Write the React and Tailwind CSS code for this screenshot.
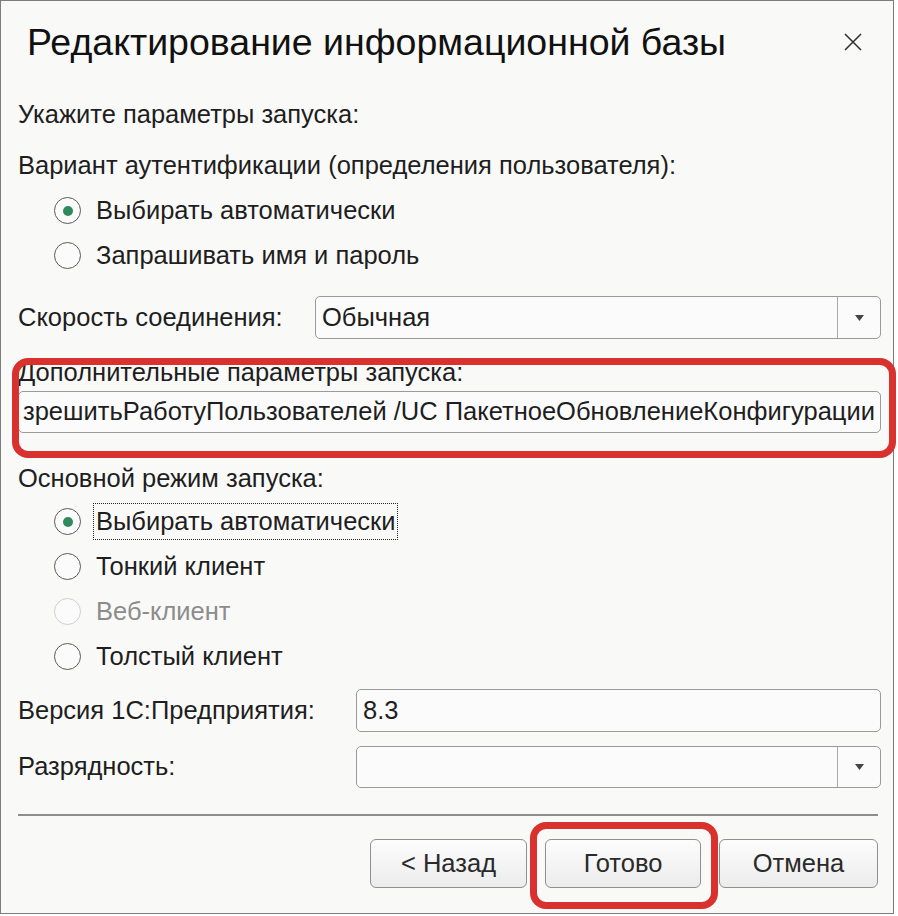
import React from "react";

const font = { fontFamily: '"Liberation Sans", Arial, sans-serif' };

function Radio({ checked, disabled, label, focus }) {
  return (
    <div className="flex items-center h-[45px]">
      <div className="w-[36px] shrink-0" />
      <div
        className={
          "w-[27px] h-[27px] rounded-full border-[1.5px] flex items-center justify-center shrink-0 bg-[#fbfbfb] " +
          (disabled ? "border-[#cfcfcf]" : "border-[#5a5a5a]")
        }
      >
        {checked && <div className="w-[10px] h-[10px] rounded-full bg-[#2f8a5c]" />}
      </div>
      {focus ? (
        <div className="ml-[12px] border border-dotted border-[#222] px-[2px] py-[5px] text-[25.5px] leading-none text-[#1e1e1e]">
          {label}
        </div>
      ) : (
        <div
          className={
            "ml-[15px] text-[25.5px] leading-none " + (disabled ? "text-[#8c8c8c]" : "text-[#1e1e1e]")
          }
        >
          {label}
        </div>
      )}
    </div>
  );
}

function SelectBox({ value, className }) {
  return (
    <div className={"flex border border-[#9a9a9a] rounded-[5px] bg-[#fbfbfb] " + className}>
      <div className="flex-1 flex items-center pl-[6px] text-[25.5px] text-[#1e1e1e] leading-none">{value}</div>
      <div className="w-[43px] border-l border-[#a8a8a8] flex items-center justify-center">
        <svg width="9" height="6" viewBox="0 0 9 6">
          <path d="M0 0 L9 0 L4.5 6 Z" fill="#444" />
        </svg>
      </div>
    </div>
  );
}

function Button({ children, className }) {
  return (
    <div
      className={
        "h-[49px] flex items-center justify-center border border-[#8f8f8f] rounded-[6px] bg-gradient-to-b from-[#fdfdfd] to-[#ececec] text-[25.5px] text-[#2a2a2a] " +
        className
      }
    >
      {children}
    </div>
  );
}

export default function App() {
  return (
    <div className="w-[898px] h-[916px] bg-white flex" style={font}>
      <div className="w-[894px] h-[914px] border border-[#7d7d7d] bg-[#f9f9f8] flex flex-col relative">
        {/* Title */}
        <div className="h-[84px] flex items-center justify-between pl-[26px] pr-[30px]">
          <div className="text-[37.5px] text-[#111] leading-none">Редактирование информационной базы</div>
          <svg width="20" height="20" viewBox="0 0 20 20" className="mt-[-2px]">
            <path d="M2 2 L18 18 M18 2 L2 18" stroke="#333" strokeWidth="1.6" />
          </svg>
        </div>
        <div className="pl-[17px] pr-[12px] flex flex-col text-[#1e1e1e]">
          <div className="h-[40px] mt-[10px] flex items-center text-[25.5px] leading-none">Укажите параметры запуска:</div>
          <div className="h-[40px] mt-[11px] flex items-center text-[25.5px] leading-none">
            Вариант аутентификации (определения пользователя):
          </div>
          <div className="mt-[2px]">
            <Radio checked label="Выбирать автоматически" />
            <Radio label="Запрашивать имя и пароль" />
          </div>
          <div className="flex items-center mt-[18px] h-[43px]">
            <div className="w-[297px] text-[25.5px] leading-none">Скорость соединения:</div>
            <SelectBox value="Обычная" className="flex-1 h-[43px]" />
          </div>
          <div className="relative mt-[16px]">
            <div className="h-[36px] flex items-center text-[25.5px] leading-none">Дополнительные параметры запуска:</div>
            <div className="h-[42px] border border-[#9a9a9a] rounded-[5px] bg-[#fbfbfb] flex items-center pl-[4px] pr-[4px]">
              <div className="flex-1 whitespace-nowrap text-[25.5px] leading-none">
                зрешитьРаботуПользователей /UC ПакетноеОбновлениеКонфигурации
              </div>
              <div className="w-[1px] h-[24px] bg-[#333] ml-[2px]" />
            </div>
          </div>
          <div className="h-[40px] mt-[26px] flex items-center text-[25.5px] leading-none">Основной режим запуска:</div>
          <div>
            <Radio checked focus label="Выбирать автоматически" />
            <Radio label="Тонкий клиент" />
            <Radio disabled label="Веб-клиент" />
            <Radio label="Толстый клиент" />
          </div>
          <div className="flex items-center mt-[10px] h-[43px]">
            <div className="w-[338px] text-[25.5px] leading-none">Версия 1С:Предприятия:</div>
            <div className="flex-1 h-[43px] border border-[#9a9a9a] rounded-[5px] bg-[#fbfbfb] flex items-center pl-[6px] text-[25.5px] leading-none">
              8.3
            </div>
          </div>
          <div className="flex items-center mt-[14px] h-[42px]">
            <div className="w-[338px] text-[25.5px] leading-none">Разрядность:</div>
            <SelectBox value="" className="flex-1 h-[42px]" />
          </div>
          <div className="h-[2px] bg-[#8e8e8e] mt-[26px] mr-[3px]" />
          <div className="flex justify-end gap-[18px] mt-[23px] mr-[3px]">
            <Button className="w-[157px]">&lt; Назад</Button>
            <Button className="w-[156px]">Готово</Button>
            <Button className="w-[159px]">Отмена</Button>
          </div>
        </div>
        {/* red annotation boxes */}
        <div className="absolute left-[11px] top-[357px] w-[884px] h-[100px] border-[7px] border-[#d8312e] rounded-[16px] pointer-events-none" />
        <div className="absolute left-[529px] top-[821px] w-[188px] h-[87px] border-[7px] border-[#d8312e] rounded-[16px] pointer-events-none" />
      </div>
    </div>
  );
}
